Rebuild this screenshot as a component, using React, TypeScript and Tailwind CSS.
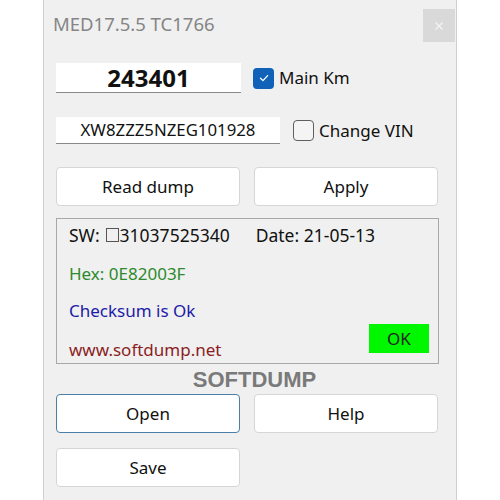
import React from "react";

function Check({ checked }: { checked: boolean }) {
  return checked ? (
    <span className="flex h-[21px] w-[21px] shrink-0 items-center justify-center rounded-[4px] bg-[#0f62b8]">
      <svg width="12" height="12" viewBox="0 0 12 12" fill="none">
        <path d="M2.5 6.2 L5 8.6 L9.6 3.6" stroke="#fff" strokeWidth="1.3" strokeLinecap="round" strokeLinejoin="round" />
      </svg>
    </span>
  ) : (
    <span className="h-[21px] w-[21px] shrink-0 rounded-[4px] border border-[#5f5f5f] bg-[#f4f4f4]" />
  );
}

function Btn({ label, focused = false }: { label: string; focused?: boolean }) {
  return (
    <button
      className={
        "flex h-[39px] w-[184px] items-center justify-center rounded-[4px] border bg-white text-[17px] text-[#111] " +
        (focused ? "border-[#4a7fa8]" : "border-[#d6d6d6]")
      }
    >
      {label}
    </button>
  );
}

export default function App() {
  return (
    <div className="h-[500px] w-[500px] bg-white [font-family:'Noto_Sans',sans-serif]">
      <div className="ml-[43px] flex h-[500px] w-[414px] flex-col border-l border-r border-[#cfcfcf] bg-[#f0f0f0] pl-[12px] pr-[17px]">
        {/* title bar */}
        <div className="flex h-[53px] items-start justify-between">
          <div className="mt-[10px] -ml-[3px] text-[18.5px] text-[#858585]">MED17.5.5 TC1766</div>
          <div className="mt-[9px] -mr-[16px] flex h-[33px] w-[32px] items-center justify-center bg-[#d9d9d9]">
            <svg width="10" height="10" viewBox="0 0 10 10">
              <path d="M1.5 1.5 L8.5 8.5 M8.5 1.5 L1.5 8.5" stroke="#f4f4f4" strokeWidth="1.2" />
            </svg>
          </div>
        </div>

        {/* km row */}
        <div className="mt-[10px] flex items-center">
          <div className="flex h-[30px] w-[185px] items-center justify-center border-b border-[#8a8a8a] bg-white text-[24px] font-bold text-[#111]">
            243401
          </div>
          <div className="ml-[12px] flex items-center gap-[5px]">
            <Check checked />
            <span className="text-[17px] text-[#111]">Main Km</span>
          </div>
        </div>

        {/* vin row */}
        <div className="mt-[24px] flex items-center">
          <div className="flex h-[27px] w-[224px] items-center justify-center border-b border-[#8a8a8a] bg-white text-[16.8px] text-[#111]">
            XW8ZZZ5NZEG101928
          </div>
          <div className="ml-[13px] flex items-center gap-[5px]">
            <Check checked={false} />
            <span className="text-[17px] text-[#111]">Change VIN</span>
          </div>
        </div>

        {/* actions */}
        <div className="mt-[23px] flex gap-[14px]">
          <Btn label="Read dump" />
          <Btn label="Apply" />
        </div>

        {/* info panel */}
        <div className="mt-[12px] flex h-[146px] w-[383px] flex-col border border-[#a8a8a8] pl-[12px] pr-[9px] text-[17px]">
          <div className="mt-[3px] flex h-[26px] items-center text-[17.5px] text-[#111]">
            <span>SW:</span>
            <span className="ml-[6px] mr-[1px] inline-block h-[14px] w-[13px] border border-[#555]" />
            <span>31037525340</span>
            <span className="ml-[26px]">Date: 21-05-13</span>
          </div>
          <div className="mt-[13px] flex h-[26px] items-center text-[#2d8a2d]">Hex: 0E82003F</div>
          <div className="mt-[11px] flex h-[26px] items-center text-[#1c1ca8]">Checksum is Ok</div>
          <div className="flex items-end justify-between">
            <span className="mb-[3px] text-[#8b1e1e]">www.softdump.net</span>
            <div className="mt-[1px] mb-[12px] flex h-[29px] w-[60px] items-center justify-center bg-[#00f700] text-[#222]">
              OK
            </div>
          </div>
        </div>

        <div className="flex h-[30px] w-[383px] items-center justify-center pl-[14px] text-[22px] font-bold text-[#7a7a7a] [font-family:'Liberation_Sans',sans-serif]">
          SOFTDUMP
        </div>

        <div className="flex gap-[14px]">
          <Btn label="Open" focused />
          <Btn label="Help" />
        </div>
        <div className="mt-[15px] flex">
          <Btn label="Save" />
        </div>
      </div>
    </div>
  );
}
